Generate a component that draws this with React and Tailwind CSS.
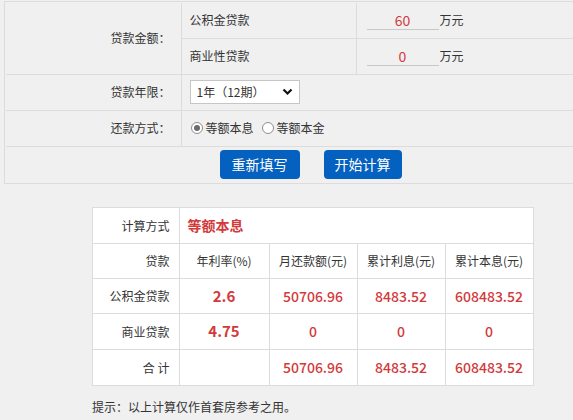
import React from "react";

const RED = "text-[#d23a3c]";
const FONT = { fontFamily: '"Microsoft YaHei", "Noto Sans CJK SC", "Noto Sans", sans-serif' };

function Radio({ checked, label }) {
  return (
    <label className="flex items-center gap-[3px] mr-[8px]">
      <span className="w-[12px] h-[12px] rounded-full border border-[#8f8f8f] bg-white flex items-center justify-center">
        {checked && <span className="w-[6px] h-[6px] rounded-full bg-[#6b6b6b]" />}
      </span>
      <span>{label}</span>
    </label>
  );
}

function AmountInput({ value }) {
  return (
    <div className="flex items-center pl-[10px]">
      <div className={`w-[72px] border-b border-[#c8c8c8] text-center text-[14px] leading-[18px] ${RED}`}>
        {value}
      </div>
      <span className="ml-[1px]">万元</span>
    </div>
  );
}

export default function App() {
  const cell = "border border-[#dcdcdc]";
  const rows = [
    ["公积金贷款", "2.6", "50706.96", "8483.52", "608483.52"],
    ["商业贷款", "4.75", "0", "0", "0"],
    ["合 计", "", "50706.96", "8483.52", "608483.52"],
  ];

  return (
    <div className="w-[573px] h-[420px] overflow-hidden bg-[#f0f0f0] text-[12px] text-[#333]" style={FONT}>
      <div className="w-[625px]">
        {/* form */}
        <div className="ml-[4px] mt-[1px] border border-[#dcdcdc] p-[1px]">
          <table className="w-full border-collapse">
            <tbody>
              <tr className="h-[35px]">
                <td rowSpan={2} className={`${cell} w-[175px] text-right pr-[10px] border-l-0 border-t-0`}>
                  贷款金额：
                </td>
                <td className={`${cell} w-[175px] pl-[8px] border-t-0`}>公积金贷款</td>
                <td className={`${cell} border-t-0 border-r-0`}>
                  <AmountInput value="60" />
                </td>
              </tr>
              <tr className="h-[36px]">
                <td className={`${cell} pl-[8px]`}>商业性贷款</td>
                <td className={`${cell} border-r-0`}>
                  <AmountInput value="0" />
                </td>
              </tr>
              <tr className="h-[36px]">
                <td className={`${cell} text-right pr-[10px] border-l-0`}>贷款年限：</td>
                <td colSpan={2} className={`${cell} pl-[8px] border-r-0`}>
                  <div className="w-[110px] h-[24px] bg-white border border-[#c6c6c6] flex items-center justify-between pl-[6px] pr-[6px]">
                    <span>1年（12期）</span>
                    <svg width="11" height="8" viewBox="0 0 11 8">
                      <path d="M1.5 1.5 L5.5 5.5 L9.5 1.5" fill="none" stroke="#111" strokeWidth="2.2" />
                    </svg>
                  </div>
                </td>
              </tr>
              <tr className="h-[36px]">
                <td className={`${cell} text-right pr-[10px] border-l-0`}>还款方式：</td>
                <td colSpan={2} className={`${cell} pl-[9px] border-r-0`}>
                  <div className="flex items-center">
                    <Radio checked label="等额本息" />
                    <Radio label="等额本金" />
                  </div>
                </td>
              </tr>
              <tr className="h-[36px]">
                <td colSpan={3} className={`${cell} border-l-0 border-r-0 border-b-0`}>
                  <div className="flex justify-center gap-[24px] pr-[8px]">
                    <button className="w-[80px] h-[29px] rounded-[4px] bg-[#0561bf] text-white text-[14px]">重新填写</button>
                    <button className="w-[78px] h-[29px] rounded-[4px] bg-[#0561bf] text-white text-[14px]">开始计算</button>
                  </div>
                </td>
              </tr>
            </tbody>
          </table>
        </div>

        {/* result */}
        <table className="mt-[23px] mx-auto w-[441px] border-collapse bg-white table-fixed">
          <colgroup>
            <col className="w-[87px]" />
            <col className="w-[90px]" />
            <col className="w-[88px]" />
            <col className="w-[88px]" />
            <col className="w-[88px]" />
          </colgroup>
          <tbody>
            <tr className="h-[36px]">
              <td className={`${cell} text-right pr-[9px]`}>计算方式</td>
              <td colSpan={4} className={`${cell} pl-[8px] text-[14px] font-bold ${RED}`}>等额本息</td>
            </tr>
            <tr className="h-[35px] text-center">
              <td className={`${cell} text-right pr-[9px]`}>贷款</td>
              <td className={cell}>年利率(%)</td>
              <td className={cell}>月还款额(元)</td>
              <td className={cell}>累计利息(元)</td>
              <td className={cell}>累计本息(元)</td>
            </tr>
            {rows.map((r, i) => (
              <tr key={r[0]} className={`${i === 0 ? "h-[35px]" : "h-[36px]"} text-center`}>
                <td className={`${cell} text-right pr-[9px]`}>{r[0]}</td>
                <td className={`${cell} text-[15px] font-bold ${RED}`}>{r[1]}</td>
                <td className={`${cell} text-[14px] font-medium ${RED}`}>{r[2]}</td>
                <td className={`${cell} text-[14px] font-medium ${RED}`}>{r[3]}</td>
                <td className={`${cell} text-[14px] font-medium ${RED}`}>{r[4]}</td>
              </tr>
            ))}
          </tbody>
        </table>

        <div className="ml-[92px] mt-[12px]">提示：以上计算仅作首套房参考之用。</div>
      </div>
    </div>
  );
}
